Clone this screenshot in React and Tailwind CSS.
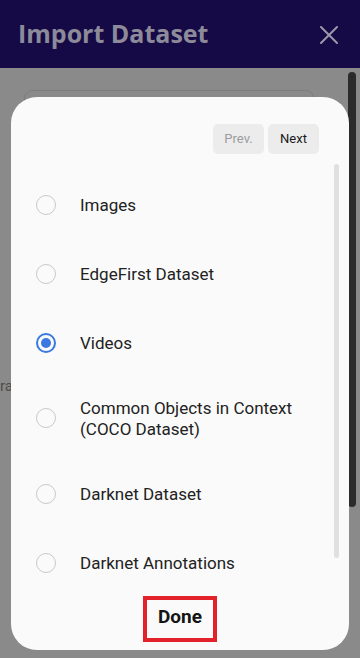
import React, { useState } from 'react';

const options = [
  { id: 'images', label: 'Images' },
  { id: 'edgefirst', label: 'EdgeFirst Dataset' },
  { id: 'videos', label: 'Videos' },
  { id: 'coco', label: 'Common Objects in Context (COCO Dataset)', tall: true },
  { id: 'darknet', label: 'Darknet Dataset' },
  { id: 'darknet-ann', label: 'Darknet Annotations' },
];

const Radio = ({ checked }) =>
  checked ? (
    <div className="w-[20px] h-[20px] rounded-full border-2 border-[#3b78e0] flex items-center justify-center shrink-0">
      <div className="w-[10px] h-[10px] rounded-full bg-[#3b78e0]" />
    </div>
  ) : (
    <div className="w-[20px] h-[20px] rounded-full border-[1.5px] border-[#c9c9c9] shrink-0" />
  );

const App = () => {
  const [selected, setSelected] = useState('videos');

  return (
    <div className="relative w-[360px] h-[658px] overflow-hidden bg-[#8a8a8a] font-['Roboto',sans-serif]">
      {/* Header (dimmed) */}
      <div className="h-[68px] bg-[#150a45] flex items-center justify-between pl-[18px] pr-[22px]">
        <h1 className="font-['Open_Sans',sans-serif] font-bold text-[25px] text-[#8d8a9a]">
          Import Dataset
        </h1>
        <svg width="18" height="18" viewBox="0 0 18 18" className="mt-[1px]">
          <path d="M1 1 L17 17 M17 1 L1 17" stroke="#9b98aa" strokeWidth="2" strokeLinecap="round" />
        </svg>
      </div>

      {/* Page underneath */}
      <div className="px-[24px] pt-[22px] pr-[46px]">
        <div className="h-[60px] rounded-lg border border-[#7d7d7d]" />
      </div>
      <div className="mt-[229px] text-[15px] text-[#4e4e4e] leading-none">ra</div>

      {/* Page scrollbar */}
      <div className="absolute right-[4px] top-[72px] w-[8px] h-[435px] rounded-full bg-[#2b2b2b]" />

      {/* Dialog */}
      <div className="absolute left-[11px] top-[97px] w-[338px] h-[553px] bg-[#fafafa] rounded-[26px]">
        <div className="flex justify-end gap-[4px] pt-[27px] pr-[30px]">
          <button className="w-[51px] h-[30px] rounded-[5px] bg-[#ececec] text-[13px] text-[#9d9d9d]">Prev.</button>
          <button className="w-[51px] h-[30px] rounded-[5px] bg-[#ececec] text-[13px] text-[#1a1a1a]">Next</button>
        </div>

        <div className="mt-[16px]">
          {options.map((opt) => (
            <div
              key={opt.id}
              onClick={() => setSelected(opt.id)}
              className={`flex items-center gap-[24px] pl-[25px] pr-[40px] ${opt.tall ? 'h-[82px]' : 'h-[69px]'}`}
            >
              <Radio checked={selected === opt.id} />
              <span className="text-[17px] leading-[21px] text-[#222222] pt-[1px]">{opt.label}</span>
            </div>
          ))}
        </div>

        <div className="flex justify-center -mt-[1px]">
          <button className="w-[74px] h-[46px] border-4 border-[#e3212b] text-[19px] font-bold text-[#141414] leading-none pb-[5px]">
            Done
          </button>
        </div>

        {/* Dialog scrollbar */}
        <div className="absolute left-[323px] top-[67px] w-[5px] h-[394px] rounded-full bg-[#e0e0e0]" />
      </div>
    </div>
  );
};

export default App;
